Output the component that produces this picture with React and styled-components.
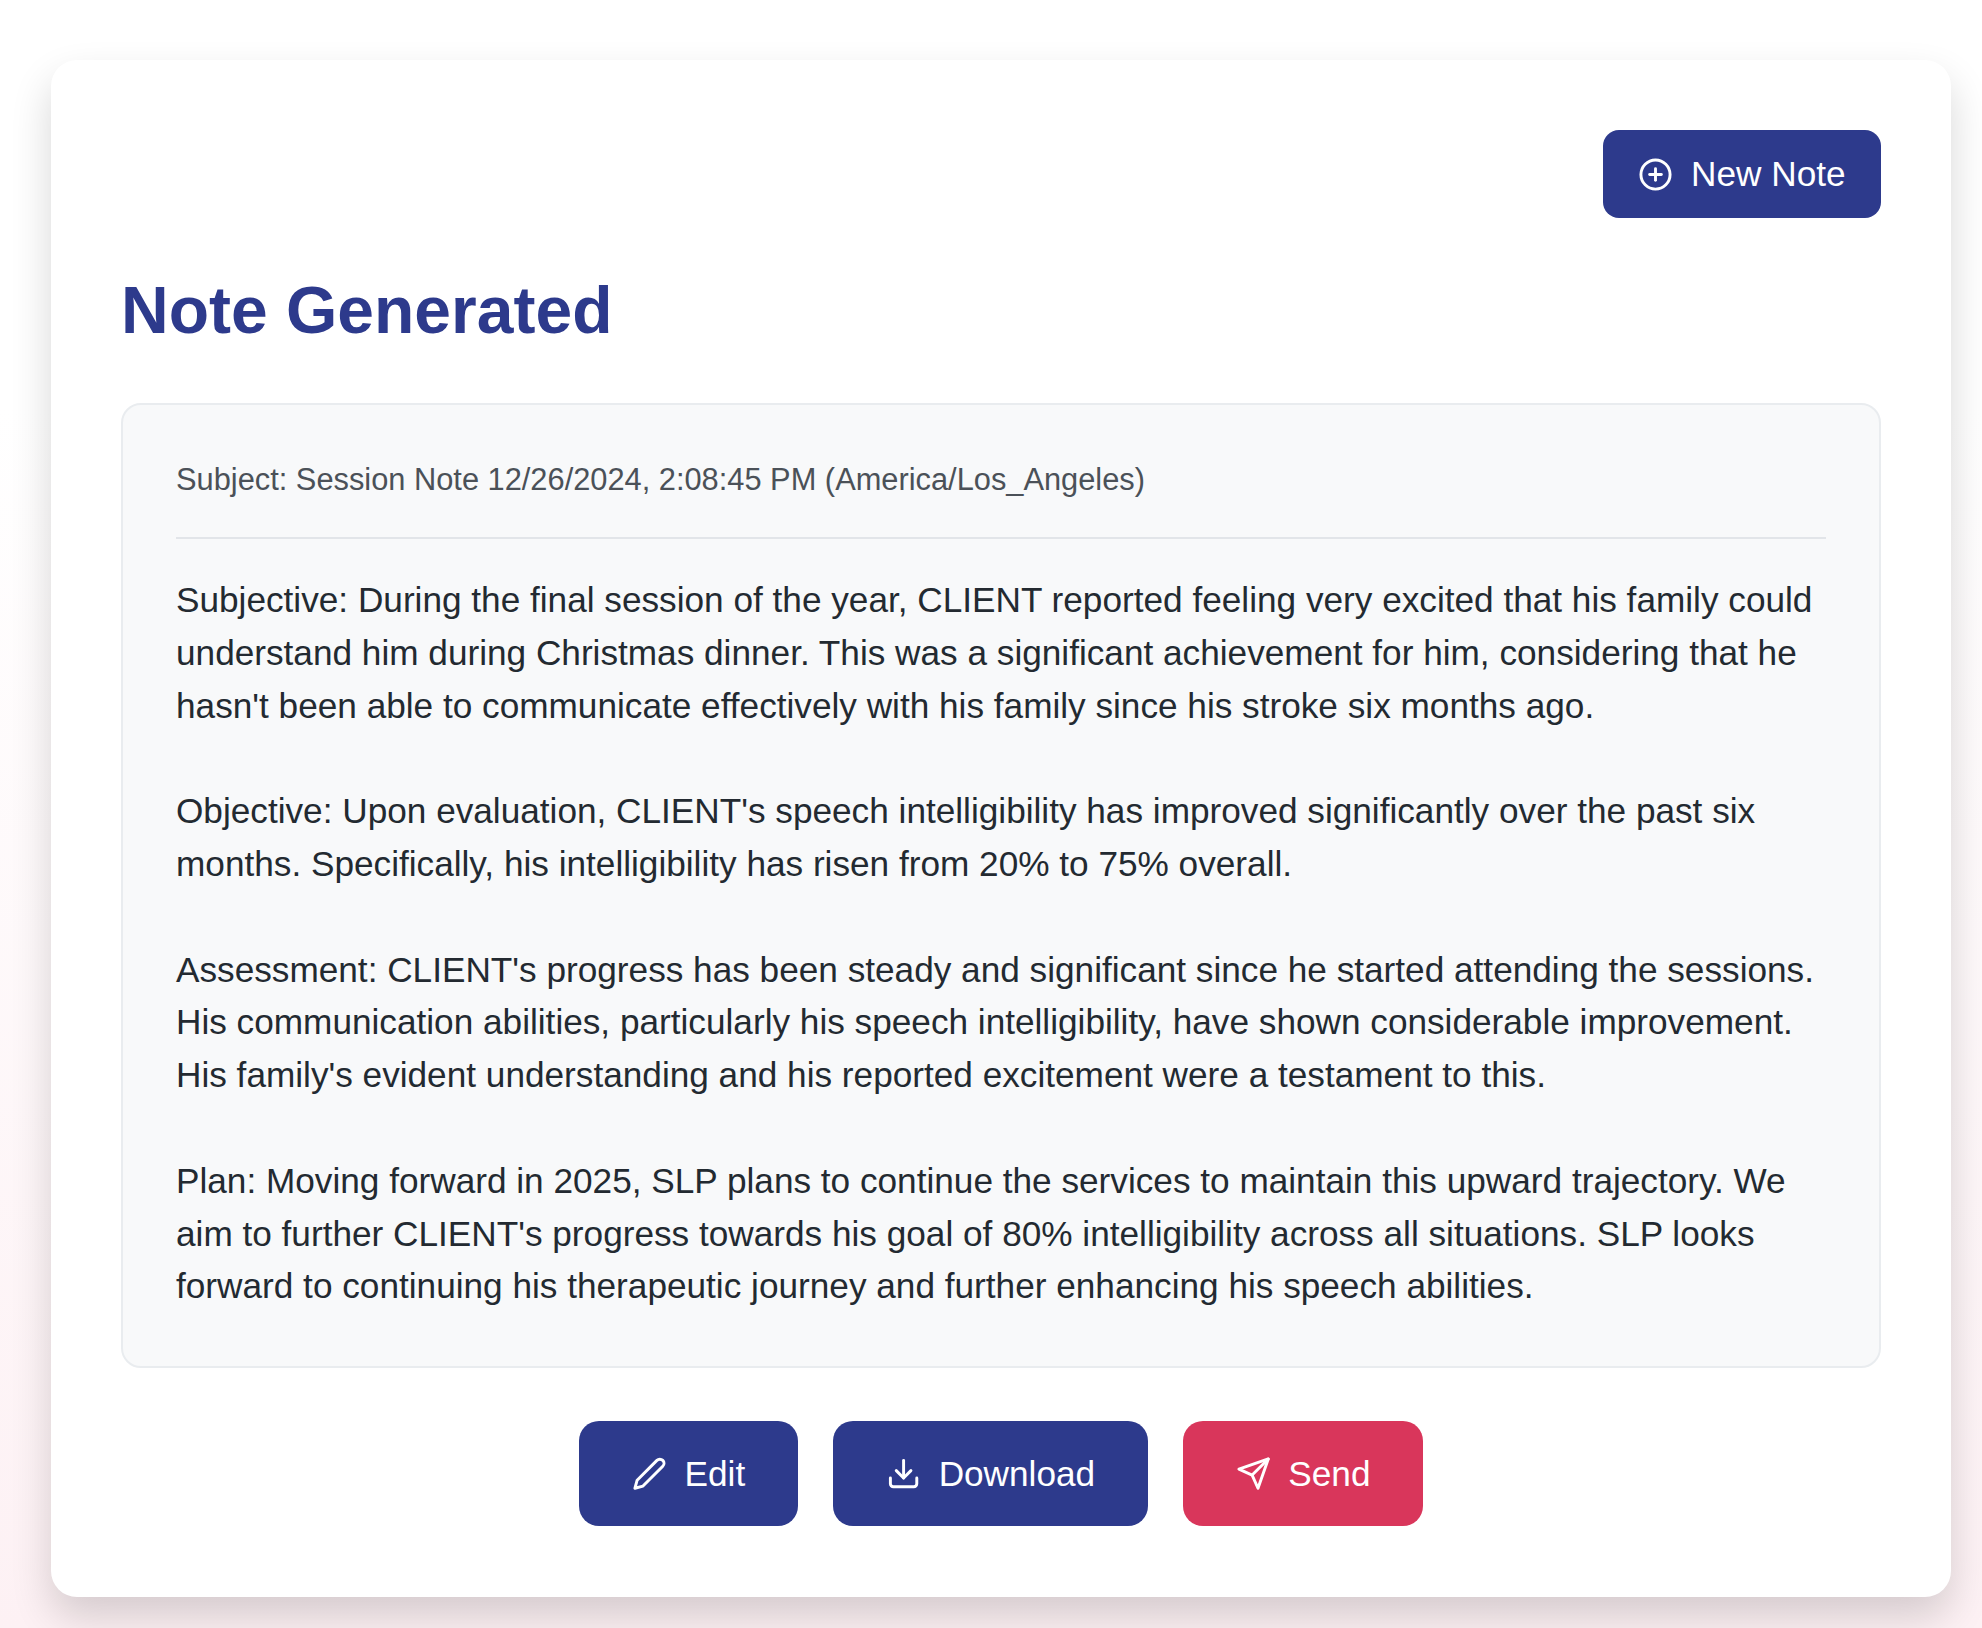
import React from 'react';
import styled, { createGlobalStyle } from 'styled-components';
import { CirclePlus } from 'lucide-react';

const GlobalStyle = createGlobalStyle`
  html, body {
    margin: 0;
    padding: 0;
  }
  body {
    min-height: 1628px;
    background: linear-gradient(to bottom, #ffffff 0%, #ffffff 25%, #fdf1f4 100%);
    font-family: "Liberation Sans", Arial, sans-serif;
  }
`;

const Page = styled.div`
  padding: 60px 31px 31px 51px;
  height: 1628px;
  box-sizing: border-box;
`;

const Card = styled.div`
  height: 1537px;
  box-sizing: border-box;
  background: #fff;
  border-radius: 26px;
  box-shadow: 0 20px 40px rgba(0, 0, 0, 0.16);
  padding: 70px;
`;

const TopBar = styled.div`
  display: flex;
  justify-content: flex-end;
`;

const Button = styled.button`
  display: inline-flex;
  align-items: center;
  justify-content: center;
  gap: 17.6px;
  height: ${p => (p.$small ? '88px' : '105px')};
  width: ${p => p.$width}px;
  padding: 0;
  border: none;
  border-radius: ${p => (p.$small ? '16px' : '20px')};
  background: ${p => (p.$danger ? '#d9365b' : '#2d3a8c')};
  color: #fff;
  font-family: inherit;
  font-size: 35.2px;
`;

const Title = styled.h1`
  margin: 54px 0 0;
  font-size: 66px;
  line-height: 76px;
  font-weight: 700;
  color: #2d3a8c;
`;

const NoteBox = styled.div`
  margin-top: 55px;
  box-sizing: border-box;
  height: 965px;
  padding: 54px 53px;
  background: #f8f9fa;
  border: 2px solid #e9ecef;
  border-radius: 20px;
`;

const Subject = styled.div`
  padding-bottom: 37px;
  border-bottom: 2px solid #e2e5e9;
  margin-bottom: 35px;
  font-size: 30.8px;
  line-height: 41px;
  color: #4b5158;
`;

const Body = styled.div`
  white-space: pre-wrap;
  font-size: 35.2px;
  line-height: 52.8px;
  color: #232a31;
`;

const Actions = styled.div`
  display: flex;
  justify-content: center;
  gap: 35px;
  margin-top: 53px;
`;

const Icon = styled.svg.attrs({
  viewBox: '0 0 24 24',
  fill: 'none',
  stroke: 'currentColor',
  strokeWidth: 2,
  strokeLinecap: 'round',
  strokeLinejoin: 'round'
})`
  width: 35.2px;
  height: 35.2px;
  flex-shrink: 0;
`;

const note = `Subjective: During the final session of the year, CLIENT reported feeling very excited that his family could understand him during Christmas dinner. This was a significant achievement for him, considering that he hasn't been able to communicate effectively with his family since his stroke six months ago.

Objective: Upon evaluation, CLIENT's speech intelligibility has improved significantly over the past six months. Specifically, his intelligibility has risen from 20% to 75% overall.

Assessment: CLIENT's progress has been steady and significant since he started attending the sessions. His communication abilities, particularly his speech intelligibility, have shown considerable improvement. His family's evident understanding and his reported excitement were a testament to this.

Plan: Moving forward in 2025, SLP plans to continue the services to maintain this upward trajectory. We aim to further CLIENT's progress towards his goal of 80% intelligibility across all situations. SLP looks forward to continuing his therapeutic journey and further enhancing his speech abilities.`;

export default function App() {
  return (
    <>
      <GlobalStyle />
      <Page>
        <Card>
          <TopBar>
            <Button $small $width={278}>
              <CirclePlus size={35} strokeWidth={2} />
              New Note
            </Button>
          </TopBar>
          <Title>Note Generated</Title>
          <NoteBox>
            <Subject>Subject: Session Note 12/26/2024, 2:08:45 PM (America/Los_Angeles)</Subject>
            <Body>{note}</Body>
          </NoteBox>
          <Actions>
            <Button $width={219}>
              <Icon>
                <path d="M17 3a2.828 2.828 0 1 1 4 4L7.5 20.5 2 22l1.5-5.5L17 3z" />
              </Icon>
              Edit
            </Button>
            <Button $width={315}>
              <Icon>
                <path d="M21 15v4a2 2 0 0 1-2 2H5a2 2 0 0 1-2-2v-4" />
                <polyline points="7 10 12 15 17 10" />
                <line x1="12" y1="15" x2="12" y2="3" />
              </Icon>
              Download
            </Button>
            <Button $danger $width={240}>
              <Icon>
                <line x1="22" y1="2" x2="11" y2="13" />
                <polygon points="22 2 15 22 11 13 2 9 22 2" />
              </Icon>
              Send
            </Button>
          </Actions>
        </Card>
      </Page>
    </>
  );
}
